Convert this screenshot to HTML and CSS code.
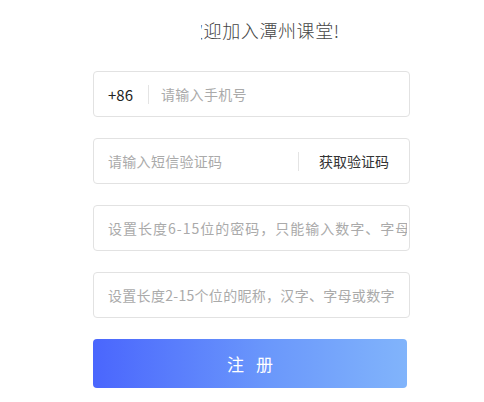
FILE: index.html
```html
<!DOCTYPE html>
<html lang="zh-CN">
<head>
<meta charset="utf-8">
<title>注册</title>
<link rel="stylesheet" href="styles.css">
</head>
<body>
<div class="page">
  <div class="title"><span class="title-text">欢迎加入潭州课堂!</span></div>
  <form class="form">
    <div class="field">
      <span class="prefix">+86</span>
      <span class="sep"></span>
      <input class="input" type="text" placeholder="请输入手机号">
    </div>
    <div class="field">
      <input class="input" type="text" placeholder="请输入短信验证码">
      <span class="sep sep-right"></span>
      <span class="action">获取验证码</span>
    </div>
    <div class="field">
      <input class="input input-wide" type="password" placeholder="设置长度6-15位的密码，只能输入数字、字母和下划线">
    </div>
    <div class="field">
      <input class="input" type="text" placeholder="设置长度2-15个位的昵称，汉字、字母或数字">
    </div>
    <button class="submit" type="button">注 册</button>
  </form>
</div>
</body>
</html>
```
FILE: styles.css
```css
* { box-sizing: border-box; }
html, body { margin: 0; padding: 0; background: #fff; }
body { font-family: "Noto Sans CJK SC", "Microsoft YaHei", sans-serif; color: #333; }
.page { width: 484px; height: 402px; overflow: hidden; }
.title {
  margin: 19px 0 0 201px;
  width: 150px;
  height: 22px;
  overflow: hidden;
  white-space: nowrap;
  font-size: 18px;
  line-height: 22px;
  font-weight: 300;
  letter-spacing: 0.6px;
  color: #444;
}
.title-text { display: inline-block; margin-left: -16px; }
.form {
  margin: 30px 0 0 93px;
  width: 317px;
  display: flex;
  flex-direction: column;
  gap: 21px;
}
.field {
  height: 46px;
  border: 1px solid #e2e2e2;
  border-radius: 4px;
  display: flex;
  align-items: center;
  padding: 0 2px 0 14px;
  overflow: hidden;
}
.prefix { font-size: 15px; color: #222; font-family: "Noto Sans CJK SC", sans-serif; }
.sep { width: 1px; height: 19px; background: #e4e4e4; margin: 0 12px 0 15px; flex: none; }
.sep-right { margin: 0 20px 0 0; }
.input {
  flex: 1;
  min-width: 0;
  border: 0;
  outline: 0;
  padding: 0;
  font-family: "Noto Sans CJK SC", sans-serif;
  font-size: 14px;
  letter-spacing: 0.3px;
  color: #333;
  background: transparent;
}
.input-wide { letter-spacing: 1px; }
.input::placeholder { color: #aaa; }
.action { font-size: 14px; color: #333; padding-right: 18px; white-space: nowrap; }
.submit {
  width: 314px;
  height: 49px;
  border: 0;
  border-radius: 4px;
  background: linear-gradient(90deg, #4a66fd 0%, #6a97fb 55%, #81b4fb 100%);
  color: #fff;
  font-family: "Noto Sans CJK SC", sans-serif;
  font-size: 17px;
  letter-spacing: 4px;
  padding: 0 0 0 4px;
  white-space: pre;
}
```
